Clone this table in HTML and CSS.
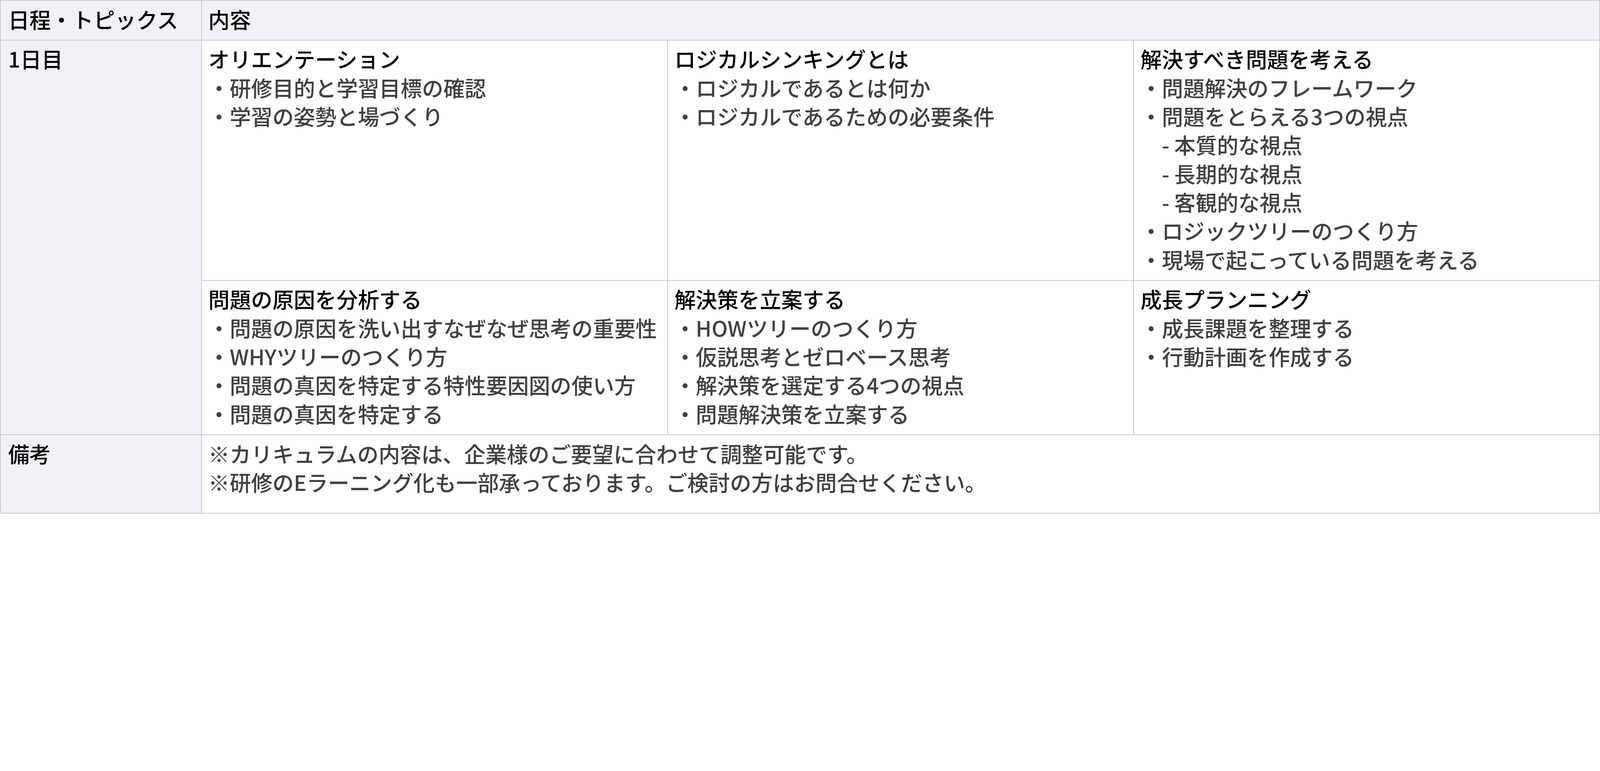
FILE: index.html
```html
<!DOCTYPE html>
<html lang="ja">
<head>
<meta charset="utf-8">
<title>研修カリキュラム</title>
<link rel="stylesheet" href="styles.css">
</head>
<body>
<table class="curriculum">
  <colgroup>
    <col class="col-label">
    <col class="col-content">
    <col class="col-content">
    <col class="col-content">
  </colgroup>
  <thead>
    <tr>
      <th class="label">日程・トピックス</th>
      <th class="head-content" colspan="3">内容</th>
    </tr>
  </thead>
  <tbody>
    <tr>
      <th class="label" rowspan="2">1日目</th>
      <td class="topic">
        <div class="title">オリエンテーション</div>
        <div class="item">・研修目的と学習目標の確認</div>
        <div class="item">・学習の姿勢と場づくり</div>
      </td>
      <td class="topic">
        <div class="title">ロジカルシンキングとは</div>
        <div class="item">・ロジカルであるとは何か</div>
        <div class="item">・ロジカルであるための必要条件</div>
      </td>
      <td class="topic">
        <div class="title">解決すべき問題を考える</div>
        <div class="item">・問題解決のフレームワーク</div>
        <div class="item">・問題をとらえる3つの視点</div>
        <div class="item sub">- 本質的な視点</div>
        <div class="item sub">- 長期的な視点</div>
        <div class="item sub">- 客観的な視点</div>
        <div class="item">・ロジックツリーのつくり方</div>
        <div class="item">・現場で起こっている問題を考える</div>
      </td>
    </tr>
    <tr>
      <td class="topic">
        <div class="title">問題の原因を分析する</div>
        <div class="item">・問題の原因を洗い出すなぜなぜ思考の重要性</div>
        <div class="item">・WHYツリーのつくり方</div>
        <div class="item">・問題の真因を特定する特性要因図の使い方</div>
        <div class="item">・問題の真因を特定する</div>
      </td>
      <td class="topic">
        <div class="title">解決策を立案する</div>
        <div class="item">・HOWツリーのつくり方</div>
        <div class="item">・仮説思考とゼロベース思考</div>
        <div class="item">・解決策を選定する4つの視点</div>
        <div class="item">・問題解決策を立案する</div>
      </td>
      <td class="topic">
        <div class="title">成長プランニング</div>
        <div class="item">・成長課題を整理する</div>
        <div class="item">・行動計画を作成する</div>
      </td>
    </tr>
    <tr>
      <th class="label">備考</th>
      <td class="notes" colspan="3">
        <div class="item">※カリキュラムの内容は、企業様のご要望に合わせて調整可能です。</div>
        <div class="item">※研修のEラーニング化も一部承っております。ご検討の方はお問合せください。</div>
      </td>
    </tr>
  </tbody>
</table>
</body>
</html>
```

FILE: styles.css
```css
html, body {
  margin: 0;
  padding: 0;
  background: #ffffff;
}

body {
  font-family: "Noto Sans CJK JP", "Noto Sans", sans-serif;
  font-size: 54.7px;
  line-height: 73.33px;
  font-weight: 500;
  color: #000000;
}

.curriculum {
  width: 100%;
  border-collapse: collapse;
  table-layout: fixed;
}

.col-label {
  width: 514.67px;
}

.curriculum th,
.curriculum td {
  border: 2px solid #c8c9cc;
  vertical-align: top;
  text-align: left;
  font-weight: 500;
  padding: 9.5px 16.67px 17px 16.67px;
}

.curriculum .label {
  background: #f0f2f7;
  color: #000000;
  padding-left: 18.67px;
}

.curriculum .head-content {
  background: #f0f2f7;
  color: #000000;
}

.title {
  color: #000000;
}

.item {
  color: #404040;
}

.sub {
  padding-left: 1em;
}

.curriculum .notes {
  padding-bottom: 43px;
}
```
